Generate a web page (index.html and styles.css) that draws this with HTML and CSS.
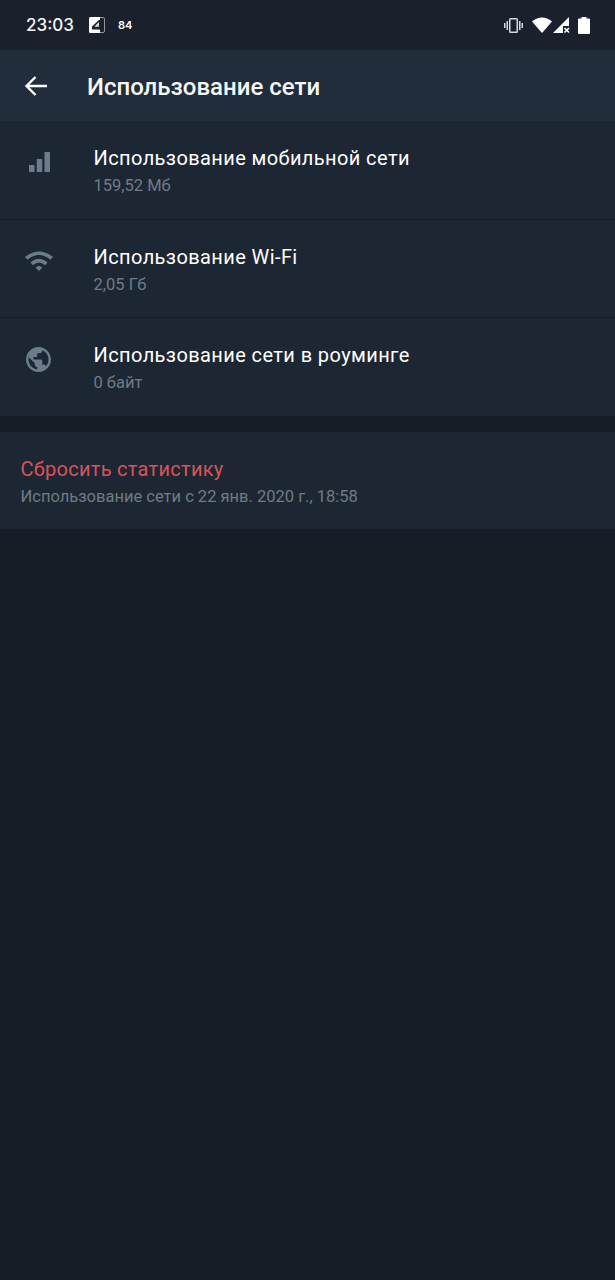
FILE: index.html
```html
<!DOCTYPE html>
<html lang="ru">
<head>
    <meta charset="UTF-8">
    <meta name="viewport" content="width=device-width, initial-scale=1.0">
    <title>Использование сети</title>
    <link rel="stylesheet" href="styles.css">
</head>
<body>
    <div class="status-bar">
        <span class="clock">23:03</span>
        <svg class="status-pic" width="16" height="16" viewBox="0 0 16 16">
            <rect x="0.5" y="0.5" width="15" height="15" rx="1.5" fill="none" stroke="#aeb2b8" stroke-width="0.8"/>
            <path d="M0 1.500 Q0 0 1.500 0 H11 V16 H1.500 Q0 16 0 14.500 Z" fill="#fff"/>
            <path d="M10 3 H14.500 V12.500 H3 V9.500 Z" fill="#1a212c"/>
            <path d="M9.800 5 V9.800 H5.600 Z" fill="#fff"/>
            <path d="M8.500 7.800 V8.800 H7.500 Z" fill="#1a212c"/>
        </svg>
        <span class="status-num">84</span>
        <div class="status-right">
            <svg width="19" height="15" viewBox="0 0 19 15" fill="#d5d8dc">
                <path d="M6.500 0 H12.500 Q14 0 14 1.500 V13.500 Q14 15 12.500 15 H6.500 Q5 15 5 13.500 V1.500 Q5 0 6.500 0 Z M6.500 1.500 V13.500 H12.500 V1.500 Z" fill-rule="evenodd"/>
                <rect x="2.500" y="3" width="1.500" height="9"/>
                <rect x="15" y="3" width="1.500" height="9"/>
                <rect x="0" y="5" width="1.500" height="5"/>
                <rect x="17.500" y="5" width="1.500" height="5"/>
            </svg>
            <svg class="status-wifi" width="20" height="16" viewBox="0 0 20 16" fill="#fff">
                <path d="M0 4.500 Q10 -3.500 20 4.500 L10 16 Z"/>
            </svg>
            <svg class="status-signal" width="17" height="17" viewBox="0 0 17 17">
                <path d="M16 0 V9 H10 V16 H0 Z" fill="#fff"/>
                <path d="M11.500 11 L16 15.500 M16 11 L11.500 15.500" stroke="#fff" stroke-width="1.600"/>
            </svg>
            <svg class="status-battery" width="12" height="17" viewBox="0 0 12 17" fill="#fff">
                <path d="M3.500 0 H8.500 V1.500 H11 Q12 1.500 12 2.500 V16 Q12 17 11 17 H1 Q0 17 0 16 V2.500 Q0 1.500 1 1.500 H3.500 Z"/>
            </svg>
        </div>
    </div>

    <div class="toolbar">
        <svg class="back" width="24" height="24" viewBox="0 0 24 24">
            <path d="M23 12 H2.500 M11.500 3 L2.500 12 L11.500 21" fill="none" stroke="#fff" stroke-width="2.400"/>
        </svg>
        <h1>Использование сети</h1>
    </div>

    <div class="section">
        <div class="row">
            <svg class="row-icon" width="26" height="24" viewBox="0 0 26 24" fill="#6d7c8a">
                <rect x="5" y="15" width="5.500" height="7"/>
                <rect x="12.750" y="9" width="5.500" height="13"/>
                <rect x="20.500" y="2" width="5.500" height="20"/>
            </svg>
            <div>
                <div class="row-title">Использование мобильной сети</div>
                <div class="row-sub">159,52 Мб</div>
            </div>
        </div>
        <div class="row">
            <svg class="row-icon" width="30" height="24" viewBox="0 0 30 24" fill="#6d7c8a">
                <path d="M1 8 Q15 -3 29 8 L26.400 10.700 Q15 1.500 3.600 10.700 Z"/>
                <path d="M6.500 13.500 Q15 6 23.500 13.500 L20.900 16.200 Q15 11 9.100 16.200 Z"/>
                <path d="M11.500 18.500 Q15 15.500 18.500 18.500 L15 22 Z"/>
            </svg>
            <div>
                <div class="row-title">Использование Wi-Fi</div>
                <div class="row-sub">2,05 Гб</div>
            </div>
        </div>
        <div class="row">
            <svg class="row-icon globe" width="26" height="26" viewBox="0 0 24 24" fill="#6d7c8a">
                <path d="M12 0C5.400 0 0 5.400 0 12s5.400 12 12 12 12-5.400 12-12S18.600 0 12 0zM10.800 21.500C6.100 20.900 2.400 16.900 2.400 12c0-.7.100-1.400.300-2.100L8.400 15.600v1.200c0 1.300 1.100 2.400 2.400 2.400zM19.100 18.500c-.3-1-1.200-1.700-2.300-1.700h-1.200v-3.600c0-.7-.5-1.200-1.200-1.200H7.200V9.600h2.400c.7 0 1.200-.5 1.200-1.200V6h2.400c1.300 0 2.400-1.100 2.400-2.400v-.5c3.500 1.400 6 4.800 6 8.900 0 2.500-1 4.800-2.500 6.500z"/>
            </svg>
            <div>
                <div class="row-title">Использование сети в роуминге</div>
                <div class="row-sub">0 байт</div>
            </div>
        </div>
    </div>

    <div class="section reset">
        <div class="reset-title">Сбросить статистику</div>
        <div class="row-sub">Использование сети с 22 янв. 2020 г., 18:58</div>
    </div>
</body>
</html>
```

FILE: styles.css
```css
* {
    margin: 0;
    padding: 0;
    box-sizing: border-box;
}

body {
    background: #161d27;
    color: #fff;
    font-family: Roboto, sans-serif;
    min-height: 1280px;
}

.status-bar {
    height: 50px;
    background: #1a212c;
    display: flex;
    align-items: center;
    padding: 0 25px 0 26px;
}

.clock {
    font-family: Inter, sans-serif;
    font-size: 17px;
    font-weight: 500;
    color: #f4f5f6;
}

.status-pic {
    margin-left: 15px;
}

.status-num {
    font-family: Inter, sans-serif;
    font-size: 11px;
    font-weight: 600;
    margin-left: 13px;
}

.status-right {
    margin-left: auto;
    display: flex;
    align-items: center;
}

.status-wifi {
    margin-left: 9px;
}

.status-signal {
    margin-left: 1px;
}

.status-battery {
    margin-left: 8px;
}

.toolbar {
    height: 71px;
    background: #212d3b;
    display: flex;
    align-items: center;
    padding-left: 24px;
}

.back {
    margin-right: 39px;
}

.toolbar h1 {
    font-size: 24px;
    font-weight: 500;
    color: #f6f7f8;
    position: relative;
    top: 1px;
}

.section {
    background: #1d2733;
}

.row {
    height: 98.5px;
    display: flex;
    align-items: flex-start;
    padding-top: 24px;
    position: relative;
    border-bottom: 1px solid #161d27;
}

.row:last-child {
    border-bottom: 0;
    height: 98px;
}

.row-icon {
    position: absolute;
    left: 24px;
    top: 29px;
}

.globe {
    left: 26px;
    width: 25px;
    height: 25px;
}

.row > div {
    margin-left: 93.5px;
}

.row-title {
    font-size: 20px;
    line-height: 26px;
    color: #fff;
    letter-spacing: 0.4px;
}

.row-sub {
    font-size: 16.5px;
    line-height: 27px;
    padding-top: 1px;
    color: #6f7b87;
}

.reset {
    margin-top: 16px;
    height: 97px;
    padding: 24px 20.5px 0;
}

.reset-title {
    font-size: 20px;
    line-height: 26px;
    letter-spacing: 0.28px;
    color: #d9535a;
}
```
